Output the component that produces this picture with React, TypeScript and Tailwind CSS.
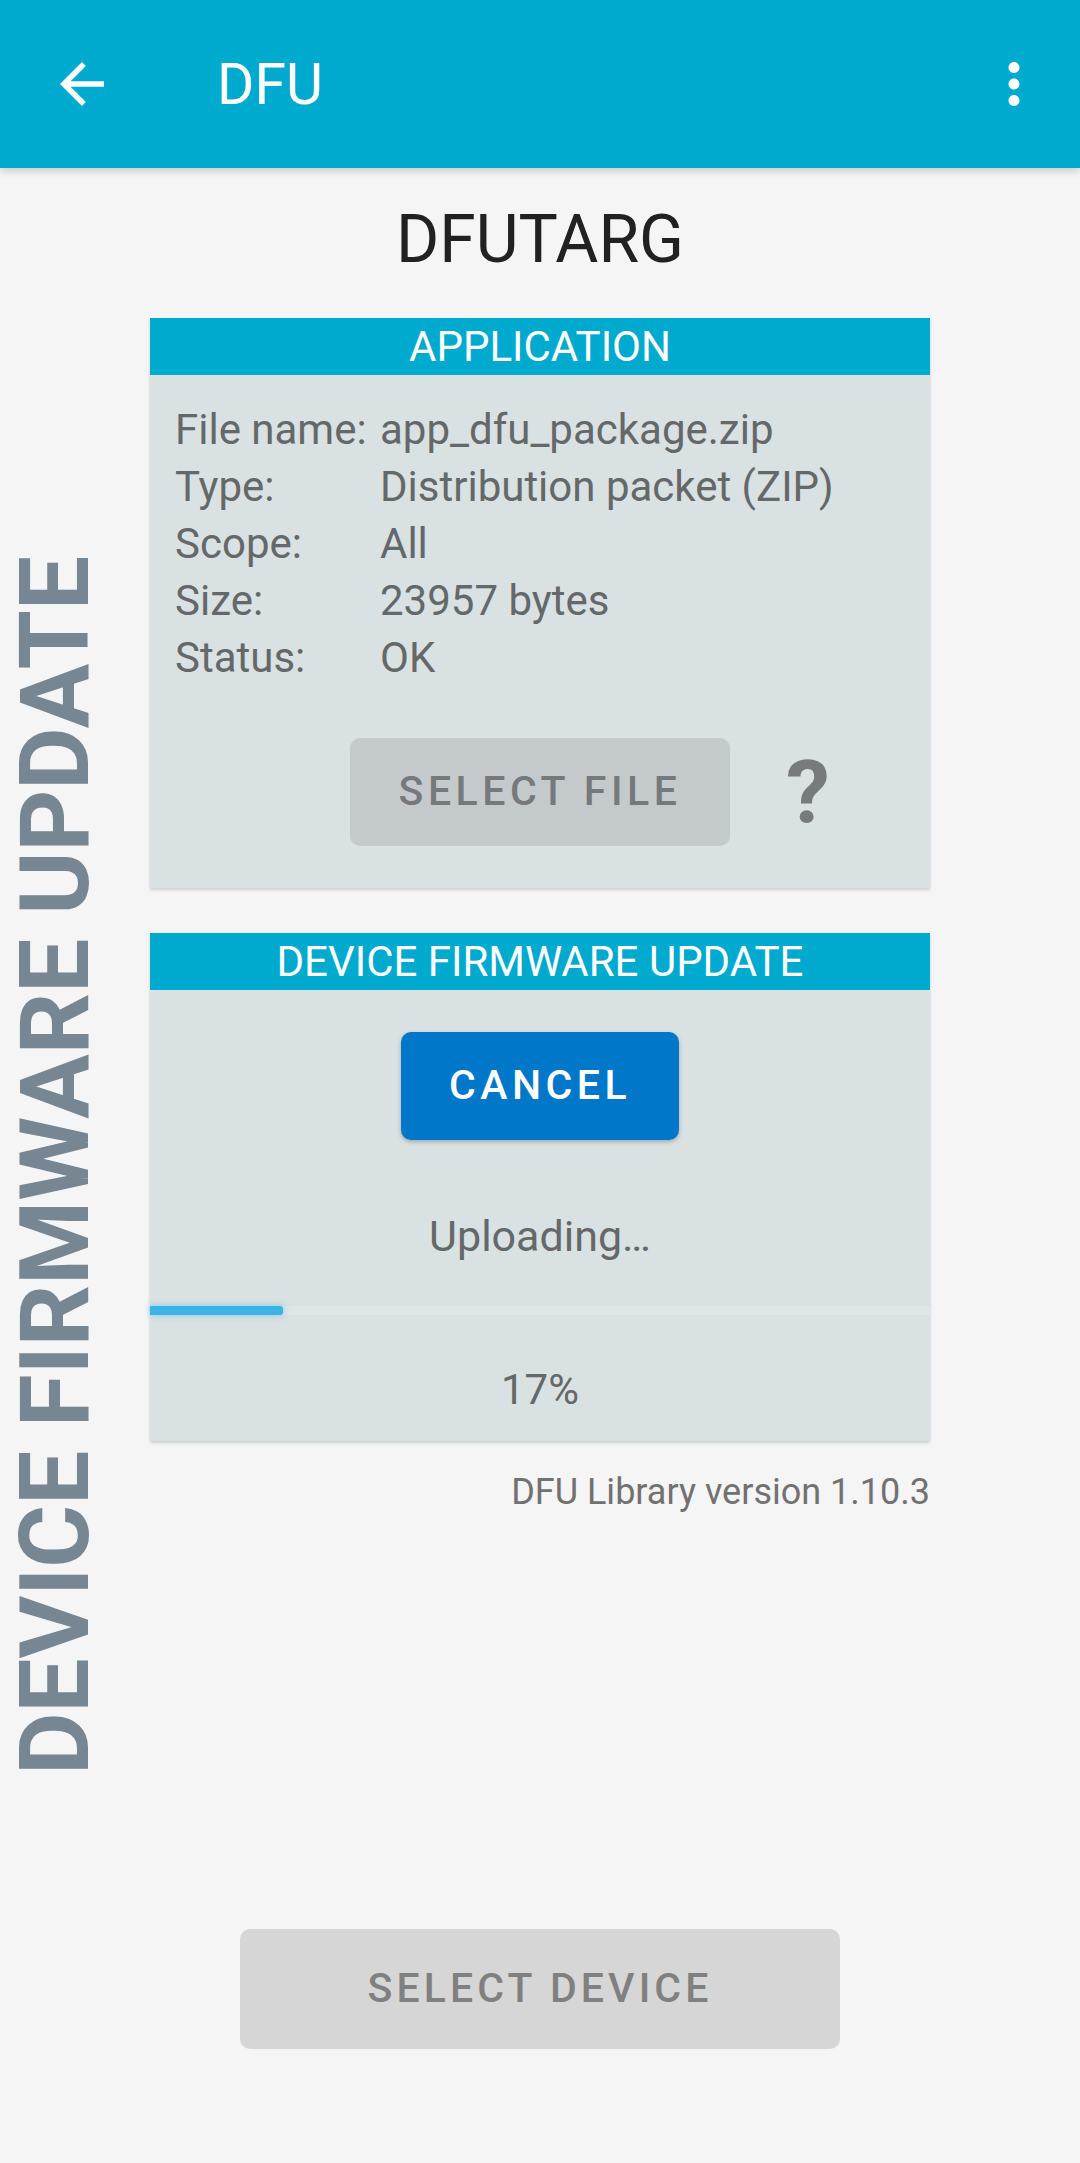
import type { ReactNode } from "react"

const FILE_INFO = [
  { label: "File name:", value: "app_dfu_package.zip" },
  { label: "Type:", value: "Distribution packet (ZIP)" },
  { label: "Scope:", value: "All" },
  { label: "Size:", value: "23957 bytes" },
  { label: "Status:", value: "OK" },
]

const PROGRESS = 17

function Card({ title, children }: { title: string; children: ReactNode }) {
  return (
    <section className="bg-[#d9e1e2] shadow-[0_2px_3px_rgba(0,0,0,0.16)]">
      <h2 className="h-[57px] bg-[#00a9ce] text-center text-[42px] leading-[57px] text-white">
        {title}
      </h2>
      {children}
    </section>
  )
}

function Toolbar() {
  return (
    <header className="relative z-10 flex h-[168px] items-center bg-[#00a9ce] pl-[49px] pr-[33px] shadow-[0_3px_8px_rgba(0,0,0,0.18)]">
      <svg viewBox="0 0 24 24" className="h-[66px] w-[66px] fill-white">
        <path d="M20 11H7.83l5.59-5.59L12 4l-8 8 8 8 1.41-1.41L7.83 13H20v-2z" />
      </svg>
      <h1 className="ml-[102px] text-[57px] leading-none text-white">DFU</h1>
      <svg viewBox="0 0 24 24" className="ml-auto h-[66px] w-[66px] fill-white">
        <path d="M12 8c1.1 0 2-.9 2-2s-.9-2-2-2-2 .9-2 2 .9 2 2 2zm0 2c-1.1 0-2 .9-2 2s.9 2 2 2 2-.9 2-2-.9-2-2-2zm0 6c-1.1 0-2 .9-2 2s.9 2 2 2 2-.9 2-2-.9-2-2-2z" />
      </svg>
    </header>
  )
}

export default function App() {
  return (
    <div className="min-h-[2163px] w-[1080px] bg-[#f5f5f5] font-['Roboto',sans-serif]">
      <Toolbar />
      <main className="grid h-[1995px] grid-cols-[150px_780px_150px]">
        <div className="flex items-center pl-[7px]">
          <span className="rotate-180 whitespace-nowrap text-[96px] font-bold leading-none text-[#768692] [writing-mode:vertical-rl]">
            DEVICE FIRMWARE UPDATE
          </span>
        </div>

        <div className="flex flex-col">
          <p className="mt-[33px] text-center text-[66px] leading-[77px] text-[#212121]">
            DFUTARG
          </p>

          <div className="mt-[40px]">
            <Card title="APPLICATION">
              <dl className="grid grid-cols-[205px_1fr] pl-[25px] pt-[26px] text-[42px] leading-[57px] text-[#646869]">
                {FILE_INFO.map((row) => (
                  <div key={row.label} className="contents">
                    <dt>{row.label}</dt>
                    <dd>{row.value}</dd>
                  </div>
                ))}
              </dl>
              <div className="mt-[52px] grid grid-cols-[1fr_380px_1fr] items-center pb-[42px]">
                <span />
                <button className="h-[108px] rounded-[10px] bg-[#c4cacc] text-[41px] font-medium tracking-[0.11em] text-[#75797b]">
                  SELECT FILE
                </button>
                <span className="ml-[56px] text-[88px] font-bold leading-none text-[#777b7c]">
                  ?
                </span>
              </div>
            </Card>
          </div>

          <div className="mt-[45px]">
            <Card title="DEVICE FIRMWARE UPDATE">
              <div className="flex flex-col items-center pb-[28px]">
                <button className="mt-[42px] h-[108px] w-[278px] rounded-[10px] bg-[#0077c8] text-[41px] font-medium tracking-[0.11em] text-white shadow-[0_2px_4px_rgba(0,0,0,0.25)]">
                  CANCEL
                </button>
                <p className="mt-[71px] text-[43px] leading-[50px] text-[#646869]">
                  Uploading…
                </p>
                <div className="mt-[45px] h-[9px] w-full bg-[#dfe6e7]">
                  <div
                    className="h-full rounded-r-[3px] bg-[#3ab4e5] shadow-[0_0_6px_rgba(58,180,229,0.55)]"
                    style={{ width: `${PROGRESS}%` }}
                  />
                </div>
                <p className="mt-[52px] text-[42px] leading-[46px] text-[#646869]">
                  {PROGRESS}%
                </p>
              </div>
            </Card>
          </div>

          <p className="mt-[30px] text-right text-[36px] leading-[42px] text-[#717171]">
            DFU Library version 1.10.3
          </p>

          <button className="mx-auto mb-[114px] mt-auto h-[120px] w-[600px] rounded-[10px] bg-[#d6d6d6] text-[41px] font-medium tracking-[0.1em] text-[#808080]">
            SELECT DEVICE
          </button>
        </div>

        <div />
      </main>
    </div>
  )
}
